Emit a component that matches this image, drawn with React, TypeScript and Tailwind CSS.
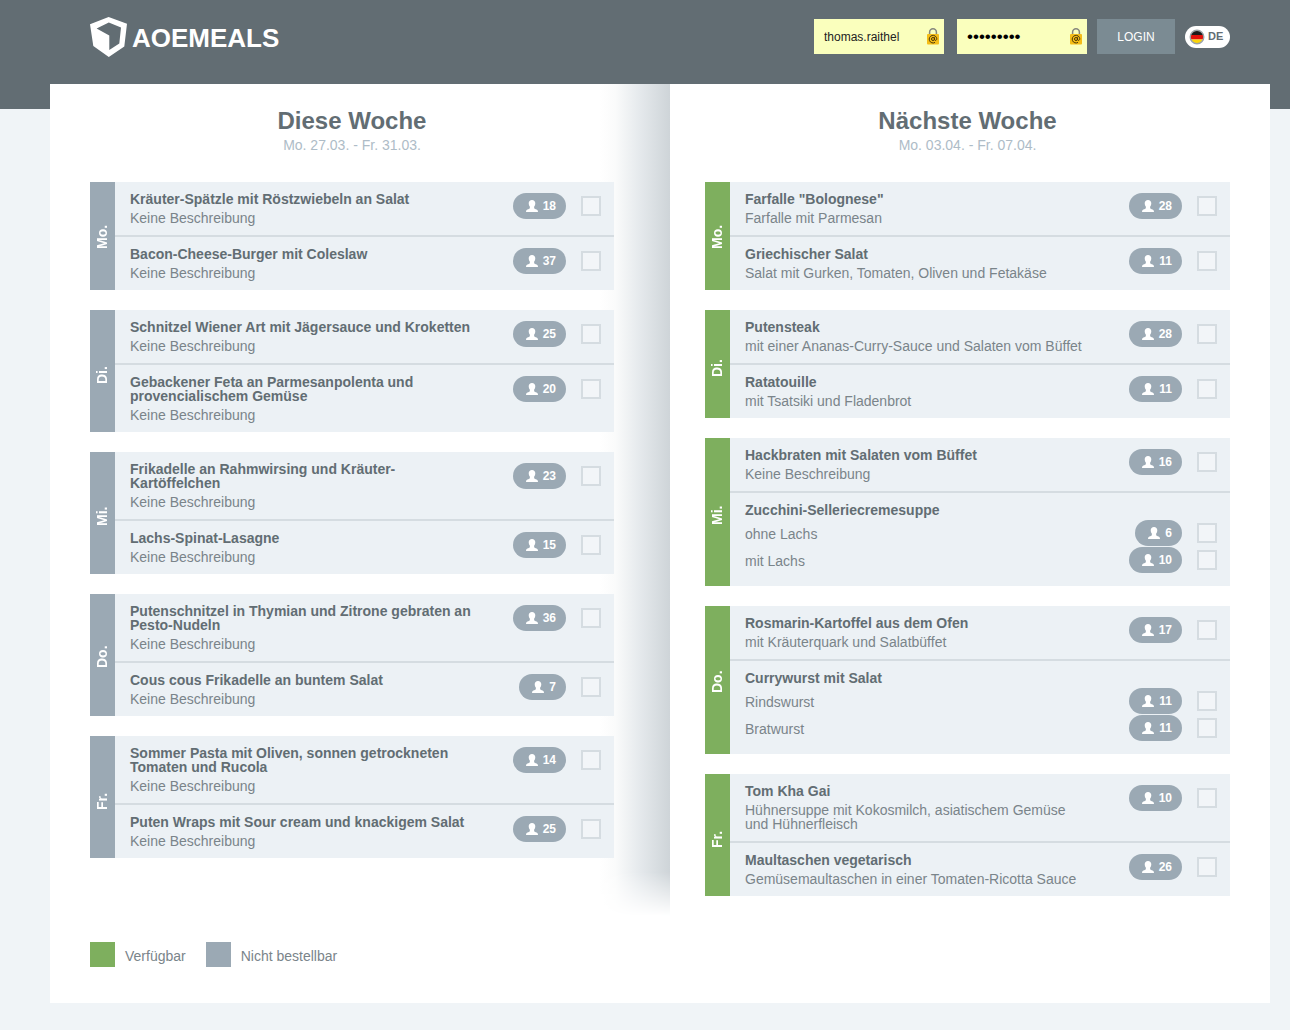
import { useId } from "react";

type Option = { label: string; count: number };
type Meal = { title: string; description?: string; count?: number; options?: Option[] };
type Day = { name: string; meals: Meal[] };

const none = "Keine Beschreibung";

const thisWeek: Day[] = [
  {
    name: "Mo.",
    meals: [
      { title: "Kräuter-Spätzle mit Röstzwiebeln an Salat", description: none, count: 18 },
      { title: "Bacon-Cheese-Burger mit Coleslaw", description: none, count: 37 },
    ],
  },
  {
    name: "Di.",
    meals: [
      { title: "Schnitzel Wiener Art mit Jägersauce und Kroketten", description: none, count: 25 },
      { title: "Gebackener Feta an Parmesanpolenta und provencialischem Gemüse", description: none, count: 20 },
    ],
  },
  {
    name: "Mi.",
    meals: [
      { title: "Frikadelle an Rahmwirsing und Kräuter-Kartöffelchen", description: none, count: 23 },
      { title: "Lachs-Spinat-Lasagne", description: none, count: 15 },
    ],
  },
  {
    name: "Do.",
    meals: [
      { title: "Putenschnitzel in Thymian und Zitrone gebraten an Pesto-Nudeln", description: none, count: 36 },
      { title: "Cous cous Frikadelle an buntem Salat", description: none, count: 7 },
    ],
  },
  {
    name: "Fr.",
    meals: [
      { title: "Sommer Pasta mit Oliven, sonnen getrockneten Tomaten und Rucola", description: none, count: 14 },
      { title: "Puten Wraps mit Sour cream und knackigem Salat", description: none, count: 25 },
    ],
  },
];

const nextWeek: Day[] = [
  {
    name: "Mo.",
    meals: [
      { title: 'Farfalle "Bolognese"', description: "Farfalle mit Parmesan", count: 28 },
      { title: "Griechischer Salat", description: "Salat mit Gurken, Tomaten, Oliven und Fetakäse", count: 11 },
    ],
  },
  {
    name: "Di.",
    meals: [
      { title: "Putensteak", description: "mit einer Ananas-Curry-Sauce und Salaten vom Büffet", count: 28 },
      { title: "Ratatouille", description: "mit Tsatsiki und Fladenbrot", count: 11 },
    ],
  },
  {
    name: "Mi.",
    meals: [
      { title: "Hackbraten mit Salaten vom Büffet", description: none, count: 16 },
      {
        title: "Zucchini-Selleriecremesuppe",
        options: [
          { label: "ohne Lachs", count: 6 },
          { label: "mit Lachs", count: 10 },
        ],
      },
    ],
  },
  {
    name: "Do.",
    meals: [
      { title: "Rosmarin-Kartoffel aus dem Ofen", description: "mit Kräuterquark und Salatbüffet", count: 17 },
      {
        title: "Currywurst mit Salat",
        options: [
          { label: "Rindswurst", count: 11 },
          { label: "Bratwurst", count: 11 },
        ],
      },
    ],
  },
  {
    name: "Fr.",
    meals: [
      { title: "Tom Kha Gai", description: "Hühnersuppe mit Kokosmilch, asiatischem Gemüse und Hühnerfleisch", count: 10 },
      { title: "Maultaschen vegetarisch", description: "Gemüsemaultaschen in einer Tomaten-Ricotta Sauce", count: 26 },
    ],
  },
];

function Logo() {
  return (
    <svg viewBox="0 0 37 40" className="h-10 w-[37px]" aria-hidden="true">
      <path
        fill="#fff"
        fillRule="evenodd"
        d="M0 7.300 18.600 0 37 6.800 34.300 29.500 18.800 40 3.300 29ZM6.600 11.500 18.800 5.600 31 10.600 29.300 26.600 19.300 33V18.400Z"
      />
    </svg>
  );
}

function LockIcon() {
  return (
    <svg viewBox="0 0 12 17" className="pointer-events-none absolute top-[9px] right-[5px] h-[17px] w-3" aria-hidden="true">
      <path d="M2.600 7V4.200a3.300 3.300 0 0 1 6.800 0V7" fill="none" stroke="#85867e" strokeWidth="1.500" />
      <rect x="0" y="6" width="12" height="10.500" rx="1" fill="#f5bd18" />
      <circle cx="6" cy="11" r="1.500" fill="none" stroke="#4a3808" />
      <path d="M7.500 9.300v2.100c0 1.500 2.300 1.200 2.300-.6A3.800 3.800 0 1 0 8 14.400" fill="none" stroke="#4a3808" />
    </svg>
  );
}

function Flag() {
  const clip = useId();
  return (
    <svg viewBox="0 0 16 16" className="size-4" aria-hidden="true">
      <clipPath id={clip}>
        <circle cx="8" cy="8" r="6.500" />
      </clipPath>
      <g clipPath={`url(#${clip})`}>
        <path fill="#1b1b1b" d="M0 0h16v6H0z" />
        <path fill="#e0110c" d="M0 6h16v4.500H0z" />
        <path fill="#fbd50a" d="M0 10.500h16V16H0z" />
      </g>
      <circle cx="8" cy="8" r="6.800" fill="none" stroke="#9aa2a6" strokeWidth="1.400" />
    </svg>
  );
}

function Count({ value }: { value: number }) {
  return (
    <span className="flex w-[53px] shrink-0 justify-end">
      <span className="flex h-[26px] items-center gap-[5px] rounded-full bg-[#9ba9b4] pr-[10px] pl-[13px] text-xs font-bold text-white">
        <svg viewBox="0 0 12 12" className="size-3" aria-hidden="true">
          <path
            fill="#fff"
            d="M6 0C8 0 9.300 1.300 9.300 3.300 9.300 4.700 8.900 5.800 8.200 6.600L8.100 8.200C8.900 9 10.500 9.200 11.300 9.900 11.800 10.400 12 11 12 12H0C0 11 .2 10.400.7 9.900 1.500 9.200 3.100 9 3.900 8.200L3.800 6.600C3.100 5.800 2.700 4.700 2.700 3.300 2.700 1.300 4 0 6 0Z"
          />
        </svg>
        {value}
      </span>
    </span>
  );
}

function Tick({ label }: { label: string }) {
  return (
    <input
      type="checkbox"
      aria-label={label}
      className="ml-[15px] size-5 shrink-0 appearance-none border-2 border-[#d5dce1] bg-[#f2f5f8] checked:bg-[#7eaf5e]"
    />
  );
}

function MealRow({ meal }: { meal: Meal }) {
  return (
    <li className="border-b-2 border-[#d5dce1] pr-[13px] pl-[15px] last:border-b-0">
      {meal.options ? (
        <div className="pt-[10px] pb-[13px]">
          <h3 className="mb-[3px] text-sm leading-[14px] font-bold">{meal.title}</h3>
          <ul className="flex flex-col gap-px">
            {meal.options.map((option) => (
              <li key={option.label} className="flex items-center">
                <span className="flex-1 pt-0.5 text-sm leading-[14px] text-[#7a848a]">{option.label}</span>
                <Count value={option.count} />
                <Tick label={`${meal.title} ${option.label}`} />
              </li>
            ))}
          </ul>
        </div>
      ) : (
        <div className="flex items-start">
          <div className="mr-[39px] flex-1 py-[10px]">
            <h3 className="mb-[5px] text-sm leading-[14px] font-bold">{meal.title}</h3>
            <p className="text-sm leading-[14px] text-[#7a848a]">{meal.description}</p>
          </div>
          <div className="flex items-center pt-[11px]">
            <Count value={meal.count ?? 0} />
            <Tick label={meal.title} />
          </div>
        </div>
      )}
    </li>
  );
}

function Week({ title, range, days, open }: { title: string; range: string; days: Day[]; open: boolean }) {
  return (
    <>
      <header className="mb-[27px] text-center">
        <h2 className="text-2xl leading-7 font-bold">{title}</h2>
        <p className="text-sm leading-5 text-[#aebcc7]">{range}</p>
      </header>
      <div className="flex flex-col gap-5">
        {days.map((day) => (
          <section key={day.name} className="flex">
            <div className={`flex w-[25px] shrink-0 items-center justify-center pr-0.5 ${open ? "bg-[#7eaf5e]" : "bg-[#9ba9b4]"}`}>
              <span className="h-[26px] rotate-180 text-sm leading-none font-bold text-white [writing-mode:vertical-rl]">{day.name}</span>
            </div>
            <ul className="flex-1 bg-[#ecf1f5]">
              {day.meals.map((meal) => (
                <MealRow key={meal.title} meal={meal} />
              ))}
            </ul>
          </section>
        ))}
      </div>
    </>
  );
}

export default function App() {
  return (
    <div className="min-h-screen bg-[#f0f4f7] pb-[27px] font-['Liberation_Sans',Arial,sans-serif] text-[#626d73]">
      <header className="flex h-[109px] items-start justify-between bg-[#626d73] pr-[60px] pl-[90px]">
        <a href="#" className="mt-[17px] flex items-start gap-[5px] text-[26px] font-bold text-white">
          <Logo />
          <span className="leading-[42px]">AOEMEALS</span>
        </a>
        <form className="mt-[19px] flex items-center" onSubmit={(e) => e.preventDefault()}>
          <div className="relative mr-[13px]">
            <input
              type="text"
              aria-label="Benutzername"
              defaultValue="thomas.raithel"
              className="h-[35px] w-[130px] bg-[#faffbd] pr-6 pl-[10px] text-xs text-[#222]"
            />
            <LockIcon />
          </div>
          <div className="relative mr-[10px]">
            <input
              type="password"
              aria-label="Passwort"
              defaultValue="mealsmeal"
              className="h-[35px] w-[130px] bg-[#faffbd] pr-6 pl-[10px] text-[17px] text-black"
            />
            <LockIcon />
          </div>
          <button type="submit" className="h-[35px] w-[78px] bg-[#7b8b93] text-xs text-white">
            LOGIN
          </button>
          <button type="button" className="ml-[10px] flex h-[22px] w-[45px] items-center gap-[3px] rounded-full bg-white pl-1 text-[11px] font-bold">
            <Flag />
            DE
          </button>
        </form>
      </header>

      <main className="mt-[-25px] mr-5 ml-[50px] bg-white">
        <div className="grid grid-cols-[31fr_30fr]">
          <div className="relative isolate pt-[23px] pr-14 pl-10">
            <div className="absolute top-0 right-0 bottom-[-20px] -z-10 w-[70px] bg-[linear-gradient(to_right,#fff,#fafbfb_22%,#e6eaed_55%,#ced4d8)] mask-b-from-[calc(100%-44px)] mask-b-to-100%" />
            <Week title="Diese Woche" range="Mo. 27.03. - Fr. 31.03." days={thisWeek} open={false} />
          </div>
          <div className="pt-[23px] pr-10 pl-[35px]">
            <Week title="Nächste Woche" range="Mo. 03.04. - Fr. 07.04." days={nextWeek} open />
          </div>
        </div>
        <ul className="mt-[46px] flex gap-5 pb-9 pl-10 text-sm text-[#7a848a]">
          <li className="flex items-center gap-[10px]">
            <span className="size-[25px] bg-[#7eaf5e]" />
            <span className="pt-0.5">Verfügbar</span>
          </li>
          <li className="flex items-center gap-[10px]">
            <span className="size-[25px] bg-[#9ba9b4]" />
            <span className="pt-0.5">Nicht bestellbar</span>
          </li>
        </ul>
      </main>
    </div>
  );
}
